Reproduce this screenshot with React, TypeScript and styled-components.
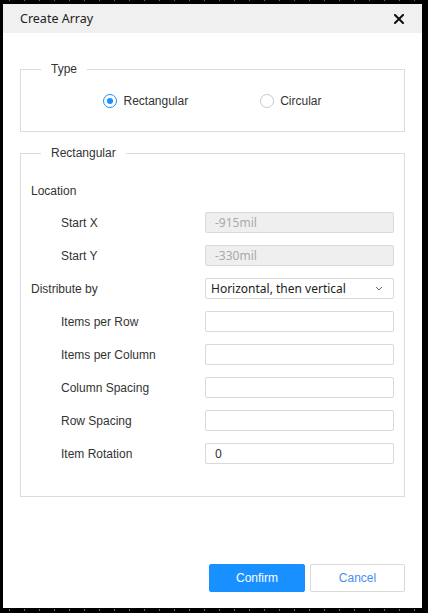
import styled, { createGlobalStyle } from "styled-components";

const GlobalStyle = createGlobalStyle`
  html, body {
    margin: 0;
    padding: 0;
    background: #000;
  }
  * {
    box-sizing: border-box;
  }
`;

type Row = {
  label: string;
  indent?: boolean;
  kind?: "none" | "disabled" | "text" | "select";
  value?: string;
};

const rows: Row[] = [
  { label: "Location", kind: "none" },
  { label: "Start X", indent: true, kind: "disabled", value: "-915mil" },
  { label: "Start Y", indent: true, kind: "disabled", value: "-330mil" },
  { label: "Distribute by", kind: "select", value: "Horizontal, then vertical" },
  { label: "Items per Row", indent: true, kind: "text" },
  { label: "Items per Column", indent: true, kind: "text" },
  { label: "Column Spacing", indent: true, kind: "text" },
  { label: "Row Spacing", indent: true, kind: "text" },
  { label: "Item Rotation", indent: true, kind: "text", value: "0" },
];

export default function App() {
  return (
    <Screen>
      <GlobalStyle />
      <Dialog>
        <Header>
          <Title>Create Array</Title>
          <CloseButton aria-label="Close">
            <svg width="10" height="10" viewBox="0 0 10 10">
              <path
                d="M1 1 L9 9 M9 1 L1 9"
                stroke="#111"
                strokeWidth="2"
                strokeLinecap="square"
              />
            </svg>
          </CloseButton>
        </Header>

        <Body>
          <Group>
            <Legend>Type</Legend>
            <RadioRow>
              <RadioItem>
                <RadioCircle $checked />
                Rectangular
              </RadioItem>
              <RadioItem>
                <RadioCircle />
                Circular
              </RadioItem>
            </RadioRow>
          </Group>

          <Group $spaced>
            <Legend>Rectangular</Legend>
            <Form>
              {rows.map((row) => (
                <FormRow key={row.label} $short={row.kind === "none"}>
                  <Label $indent={row.indent}>{row.label}</Label>
                  {row.kind === "disabled" && (
                    <Field $disabled>{row.value}</Field>
                  )}
                  {row.kind === "text" && <Field>{row.value}</Field>}
                  {row.kind === "select" && (
                    <Select>
                      {row.value}
                      <svg width="8" height="5" viewBox="0 0 8 5">
                        <path
                          d="M1 1 L4 4 L7 1"
                          stroke="#666"
                          strokeWidth="1"
                          fill="none"
                        />
                      </svg>
                    </Select>
                  )}
                </FormRow>
              ))}
            </Form>
          </Group>
        </Body>

        <Footer>
          <Button $primary>Confirm</Button>
          <Button>Cancel</Button>
        </Footer>
      </Dialog>
    </Screen>
  );
}

const Screen = styled.div`
  width: 428px;
  height: 613px;
  padding: 4px 6px 5px 3px;
  background-color: #000;
  background-image: radial-gradient(circle, #6a6a6a 0.8px, transparent 1px);
  background-size: 15px 10px;
  background-position: 2px 5px;
`;

const Dialog = styled.div`
  display: flex;
  flex-direction: column;
  height: 100%;
  background: #fff;
  font-family: "Liberation Sans", Arial, sans-serif;
  font-size: 12px;
  color: #333;
`;

const Header = styled.div`
  display: flex;
  align-items: center;
  justify-content: space-between;
  height: 29px;
  padding: 0 17px 0 17px;
  background: #f0f0f0;
`;

const Title = styled.span`
  font-family: "Noto Sans", sans-serif;
  font-size: 12.5px;
  color: #222;
`;

const CloseButton = styled.span`
  display: flex;
  align-items: center;
  margin-right: 1px;
`;

const Body = styled.div`
  flex: 1;
  padding: 28px 17px 0;
`;

const Group = styled.fieldset<{ $spaced?: boolean }>`
  margin: ${(p) => (p.$spaced ? "13px" : "0")} 0 0;
  padding: 0 10px;
  border: 1px solid #dcdcdc;
  min-width: 0;
`;

const Legend = styled.legend`
  margin-left: 10px;
  padding: 0 10px;
  line-height: 16px;
  font-size: 12px;
  color: #333;
`;

const RadioRow = styled.div`
  display: flex;
  justify-content: center;
  gap: 72px;
  padding: 16px 0 22px;
  height: 54px;
  align-items: flex-start;
`;

const RadioItem = styled.label`
  display: flex;
  align-items: center;
  gap: 6px;
  height: 16px;
  font-size: 12px;
  color: #333;
`;

const RadioCircle = styled.span<{ $checked?: boolean }>`
  position: relative;
  width: 14px;
  height: 14px;
  border-radius: 50%;
  border: 1px solid ${(p) => (p.$checked ? "#1890ff" : "#c8c8c8")};
  background: #fff;

  &::after {
    content: "";
    display: ${(p) => (p.$checked ? "block" : "none")};
    position: absolute;
    top: 3px;
    left: 3px;
    width: 6px;
    height: 6px;
    border-radius: 50%;
    background: #1890ff;
  }
`;

const Form = styled.div`
  display: flex;
  flex-direction: column;
  gap: 12px;
  padding: 21px 0 32px;
`;

const FormRow = styled.div<{ $short?: boolean }>`
  display: grid;
  grid-template-columns: 174px 1fr;
  align-items: center;
  height: ${(p) => (p.$short ? "18px" : "21px")};
`;

const Label = styled.span<{ $indent?: boolean }>`
  padding-left: ${(p) => (p.$indent ? "30px" : "0")};
  font-size: 12px;
  color: #333;
`;

const Field = styled.div<{ $disabled?: boolean }>`
  display: flex;
  align-items: center;
  height: 21px;
  padding: 0 9px;
  border: 1px solid #d9d9d9;
  border-radius: 2px;
  background: ${(p) => (p.$disabled ? "#efefef" : "#fff")};
  color: ${(p) => (p.$disabled ? "#aaa" : "#333")};
  font-family: "Noto Sans", sans-serif;
  font-size: 12px;
`;

const Select = styled(Field)`
  justify-content: space-between;
  padding: 0 10px 0 5px;
  color: #222;
`;

const Footer = styled.div`
  display: flex;
  justify-content: flex-end;
  gap: 5px;
  padding: 0 17px 16px;
`;

const Button = styled.button<{ $primary?: boolean }>`
  width: ${(p) => (p.$primary ? "96px" : "95px")};
  height: 28px;
  border: 1px solid ${(p) => (p.$primary ? "#1890ff" : "#d9d9d9")};
  border-radius: 2px;
  background: ${(p) => (p.$primary ? "#1890ff" : "#fff")};
  color: ${(p) => (p.$primary ? "#fff" : "#4a8df0")};
  font-family: "Liberation Sans", Arial, sans-serif;
  font-size: 12px;
  cursor: pointer;
`;
